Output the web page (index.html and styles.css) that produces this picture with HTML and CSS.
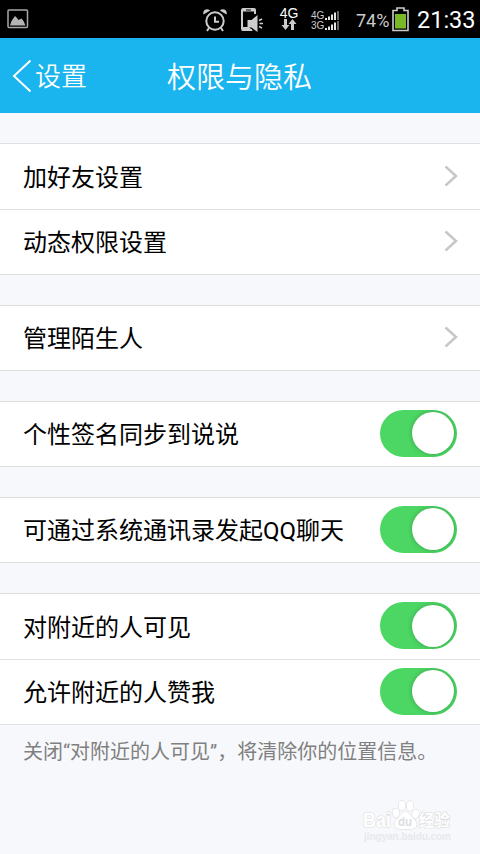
FILE: index.html
```html
<!DOCTYPE html>
<html lang="zh-CN">
<head>
    <meta charset="UTF-8">
    <title>权限与隐私</title>
    <link rel="stylesheet" href="styles.css">
</head>
<body>
    <div class="status-bar">
        <svg class="icon-picture" width="22" height="20" viewBox="0 0 22 20">
            <rect x="1" y="1" width="19.5" height="17.5" rx="1" fill="none" stroke="#a8a8a8" stroke-width="1.5"/>
            <path d="M3 16.5L4.5 12L8 7L10 9L11.5 11L14.5 9.500L16.500 12L18.500 16.500Z" fill="#b4b4b4"/>
        </svg>
        <svg class="icon-alarm" width="26" height="24" viewBox="0 0 26 24">
            <circle cx="13" cy="13" r="8.700" fill="none" stroke="#ccc" stroke-width="2"/>
            <path d="M1.500 6.500C0 2 5 -0.500 8.200 2.500ZM24.500 6.500C26 2 21 -0.500 17.800 2.500Z" fill="#ccc"/>
            <path d="M13 8.500V13.800H17M7 20L5 23M19 20L21 23" fill="none" stroke="#ccc" stroke-width="2"/>
        </svg>
        <svg class="icon-phone" width="24" height="25" viewBox="0 0 24 25">
            <path d="M15 7V3Q15 2 13.500 2H3.500Q2 2 2 3V21.500Q2 23 3.500 23H12" fill="none" stroke="#ccc" stroke-width="2"/>
            <path d="M2 1.500H15V4.500H2ZM2 20H9L13 24H2Z" fill="#ccc"/>
            <path d="M6 3H11" stroke="#000"/>
            <path d="M7.500 13H11.500L17.500 8V25L11.500 20.500H7.500Z" fill="#ccc"/>
            <path d="M19 13.500L22 12M19.500 16.500H23M19 19.500L22 21" stroke="#ccc" stroke-width="1.500"/>
        </svg>
        <div class="network">
            <span>4G</span>
            <svg width="16" height="12" viewBox="0 0 16 12">
                <path d="M3 0H6V6H8.500L4.500 11L0.500 6H3ZM10 11H13V5H15.500L11.500 0L7.500 5H10Z" fill="#ccc"/>
            </svg>
        </div>
        <div class="signals">
            <div class="signal">
                <span>4G</span>
                <svg width="15" height="10" viewBox="0 0 15 10">
                    <path d="M0 7H2V9H0ZM3 5.500H5V9H3ZM6 3.500H8V9H6ZM9 1.500H11V9H9Z" fill="#e4e4e4"/>
                    <path d="M12 0H14V9H12Z" fill="#666"/>
                </svg>
            </div>
            <div class="signal">
                <span>3G</span>
                <svg width="15" height="10" viewBox="0 0 15 10">
                    <path d="M0 7H2V9H0ZM3 5.500H5V9H3ZM6 3.500H8V9H6ZM9 1.500H11V9H9Z" fill="#e4e4e4"/>
                    <path d="M12 0H14V9H12Z" fill="#666"/>
                </svg>
            </div>
        </div>
        <span class="percent">74%</span>
        <svg class="icon-battery" width="17" height="25" viewBox="0 0 17 25">
            <path d="M1 3.500H5V1H12V3.500H16V23.500H1Z" fill="#000" stroke="#ccc" stroke-width="1.600"/>
            <rect x="3" y="7" width="11" height="14.500" fill="#79b829"/>
        </svg>
        <span class="clock">21:33</span>
    </div>

    <div class="header">
        <div class="back">
            <svg width="20" height="34" viewBox="0 0 20 34">
                <path d="M18.500 1.500L2 17L18.500 32.500" fill="none" stroke="#fff" stroke-width="2"/>
            </svg>
            <span>设置</span>
        </div>
        <div class="title">权限与隐私</div>
    </div>

    <div class="content">
        <div class="group">
            <div class="item">
                <span>加好友设置</span>
                <svg class="arrow" width="14" height="22" viewBox="0 0 14 22"><path d="M1.500 1.500L12 11L1.500 20.500"/></svg>
            </div>
            <div class="item">
                <span>动态权限设置</span>
                <svg class="arrow" width="14" height="22" viewBox="0 0 14 22"><path d="M1.500 1.500L12 11L1.500 20.500"/></svg>
            </div>
        </div>

        <div class="group">
            <div class="item">
                <span>管理陌生人</span>
                <svg class="arrow" width="14" height="22" viewBox="0 0 14 22"><path d="M1.500 1.500L12 11L1.500 20.500"/></svg>
            </div>
        </div>

        <div class="group">
            <div class="item">
                <span>个性签名同步到说说</span>
                <div class="switch"><div class="knob"></div></div>
            </div>
        </div>

        <div class="group">
            <div class="item">
                <span>可通过系统通讯录发起QQ聊天</span>
                <div class="switch"><div class="knob"></div></div>
            </div>
        </div>

        <div class="group">
            <div class="item">
                <span>对附近的人可见</span>
                <div class="switch"><div class="knob"></div></div>
            </div>
            <div class="item">
                <span>允许附近的人赞我</span>
                <div class="switch"><div class="knob"></div></div>
            </div>
        </div>
        <div class="tip">关闭“对附近的人可见”，将清除你的位置信息。</div>
    </div>

    <svg class="watermark" width="96" height="48" viewBox="0 0 96 48">
        <g class="outline">
            <text class="brand" x="2" y="29" textLength="28" lengthAdjust="spacingAndGlyphs">Bai</text>
            <text class="brand-cn" x="58" y="28" textLength="31">经验</text>
            <ellipse cx="35" cy="15" rx="3.300" ry="4.500" transform="rotate(-15 35 15)"/>
            <ellipse cx="41" cy="7.500" rx="3.300" ry="4.800"/>
            <ellipse cx="49" cy="8" rx="3.300" ry="4.800"/>
            <ellipse cx="54.500" cy="16" rx="3.300" ry="4.500" transform="rotate(15 54.500 16)"/>
            <path d="M44.500 14C49 14 50 19 54 22C59 30 52 32 45 31C38 32 30 30 35 22C39 19 40 14 44.500 14Z"/>
        </g>
        <text class="du" x="37" y="28" textLength="14" lengthAdjust="spacingAndGlyphs">du</text>
        <text class="url" x="3" y="42" textLength="87">jingyan.baidu.com</text>
    </svg>
</body>
</html>
```
FILE: styles.css
```css
body {
    margin: 0;
    height: 854px;
    position: relative;
    overflow: hidden;
    background: #f7f8fb;
    font-family: Roboto, "Noto Sans CJK SC", sans-serif;
    color: #000;
}

svg {
    display: block;
    flex-shrink: 0;
}

/* 状态栏 */
.status-bar {
    display: flex;
    align-items: center;
    height: 38px;
    background: #000;
    color: #ccc;
}

.icon-picture {
    margin-left: 7px;
}

.icon-alarm {
    margin: 2px 0 0 173px;
}

.icon-phone {
    margin: 1px 0 0 12px;
}

.network {
    display: flex;
    flex-direction: column;
    align-items: center;
    width: 20px;
    margin-left: 15px;
    font-family: "Liberation Sans", sans-serif;
    font-size: 14px;
    line-height: 12px;
    color: #fff;
}

.signals {
    display: flex;
    flex-direction: column;
    width: 30px;
    margin: 3px 0 0 12px;
}

.signal {
    display: flex;
    align-items: center;
    height: 10px;
    font-family: "Liberation Sans", sans-serif;
    font-size: 10px;
    line-height: 10px;
}

.signal span {
    width: 14px;
}

.percent {
    width: 34px;
    margin: 2px 0 0 15px;
    font-size: 18px;
    white-space: nowrap;
}

.icon-battery {
    margin-left: 2px;
}

.clock {
    margin: 2px 0 0 8px;
    font-size: 23.5px;
    color: #fff;
}

/* 标题栏 */
.header {
    display: grid;
    grid-template-columns: 167px 1fr;
    align-items: center;
    height: 75px;
    background: #1ab4ee;
    color: #fff;
    font-weight: 350;
}

.back {
    display: flex;
    align-items: center;
    padding-left: 12px;
    font-size: 26px;
}

.back span {
    margin-left: 3px;
    padding-bottom: 3px;
}

.title {
    padding-bottom: 2px;
    font-size: 29px;
}

/* 设置列表 */
.content {
    padding-top: 30px;
}

.group {
    margin-bottom: 30px;
    background: #fff;
    border-top: 1px solid #dfe0e2;
    border-bottom: 1px solid #dfe0e2;
}

.item {
    display: flex;
    align-items: center;
    justify-content: space-between;
    box-sizing: border-box;
    height: 64px;
    padding: 0 23px 2px;
    font-size: 24px;
}

.item:not(:last-child) {
    height: 66px;
    border-bottom: 1px solid #dfe0e2;
}

.item span {
    padding-bottom: 1px;
}

.arrow {
    margin-right: -1px;
    fill: none;
    stroke: #c7c7c7;
    stroke-width: 2.5;
}

.switch {
    display: flex;
    align-items: center;
    justify-content: flex-end;
    width: 77px;
    height: 47px;
    box-sizing: border-box;
    padding-right: 3px;
    border-radius: 24px;
    background: #4cd664;
    overflow: hidden;
}

.knob {
    width: 42px;
    height: 42px;
    border-radius: 50%;
    background: #fff;
    box-shadow: 0 0 5px rgba(0, 0, 0, 0.25);
}

.tip {
    margin-top: -18px;
    padding-left: 23px;
    font-size: 20px;
    line-height: 30px;
    color: #808080;
    white-space: nowrap;
}

/* 右下角水印 */
.watermark {
    position: absolute;
    left: 361px;
    top: 798px;
}

.outline {
    fill: #fff;
    stroke: #dcdddf;
    stroke-width: 1.2;
    paint-order: stroke;
}

.brand {
    font: bold 20px "Liberation Sans", sans-serif;
}

.brand-cn {
    font: bold 15.5px "Noto Sans CJK SC", sans-serif;
}

.du {
    font: bold 13px "Liberation Sans", sans-serif;
    fill: #dcdddf;
}

.url {
    font: bold 10px "Liberation Sans", sans-serif;
    fill: #e8e9eb;
}
```
